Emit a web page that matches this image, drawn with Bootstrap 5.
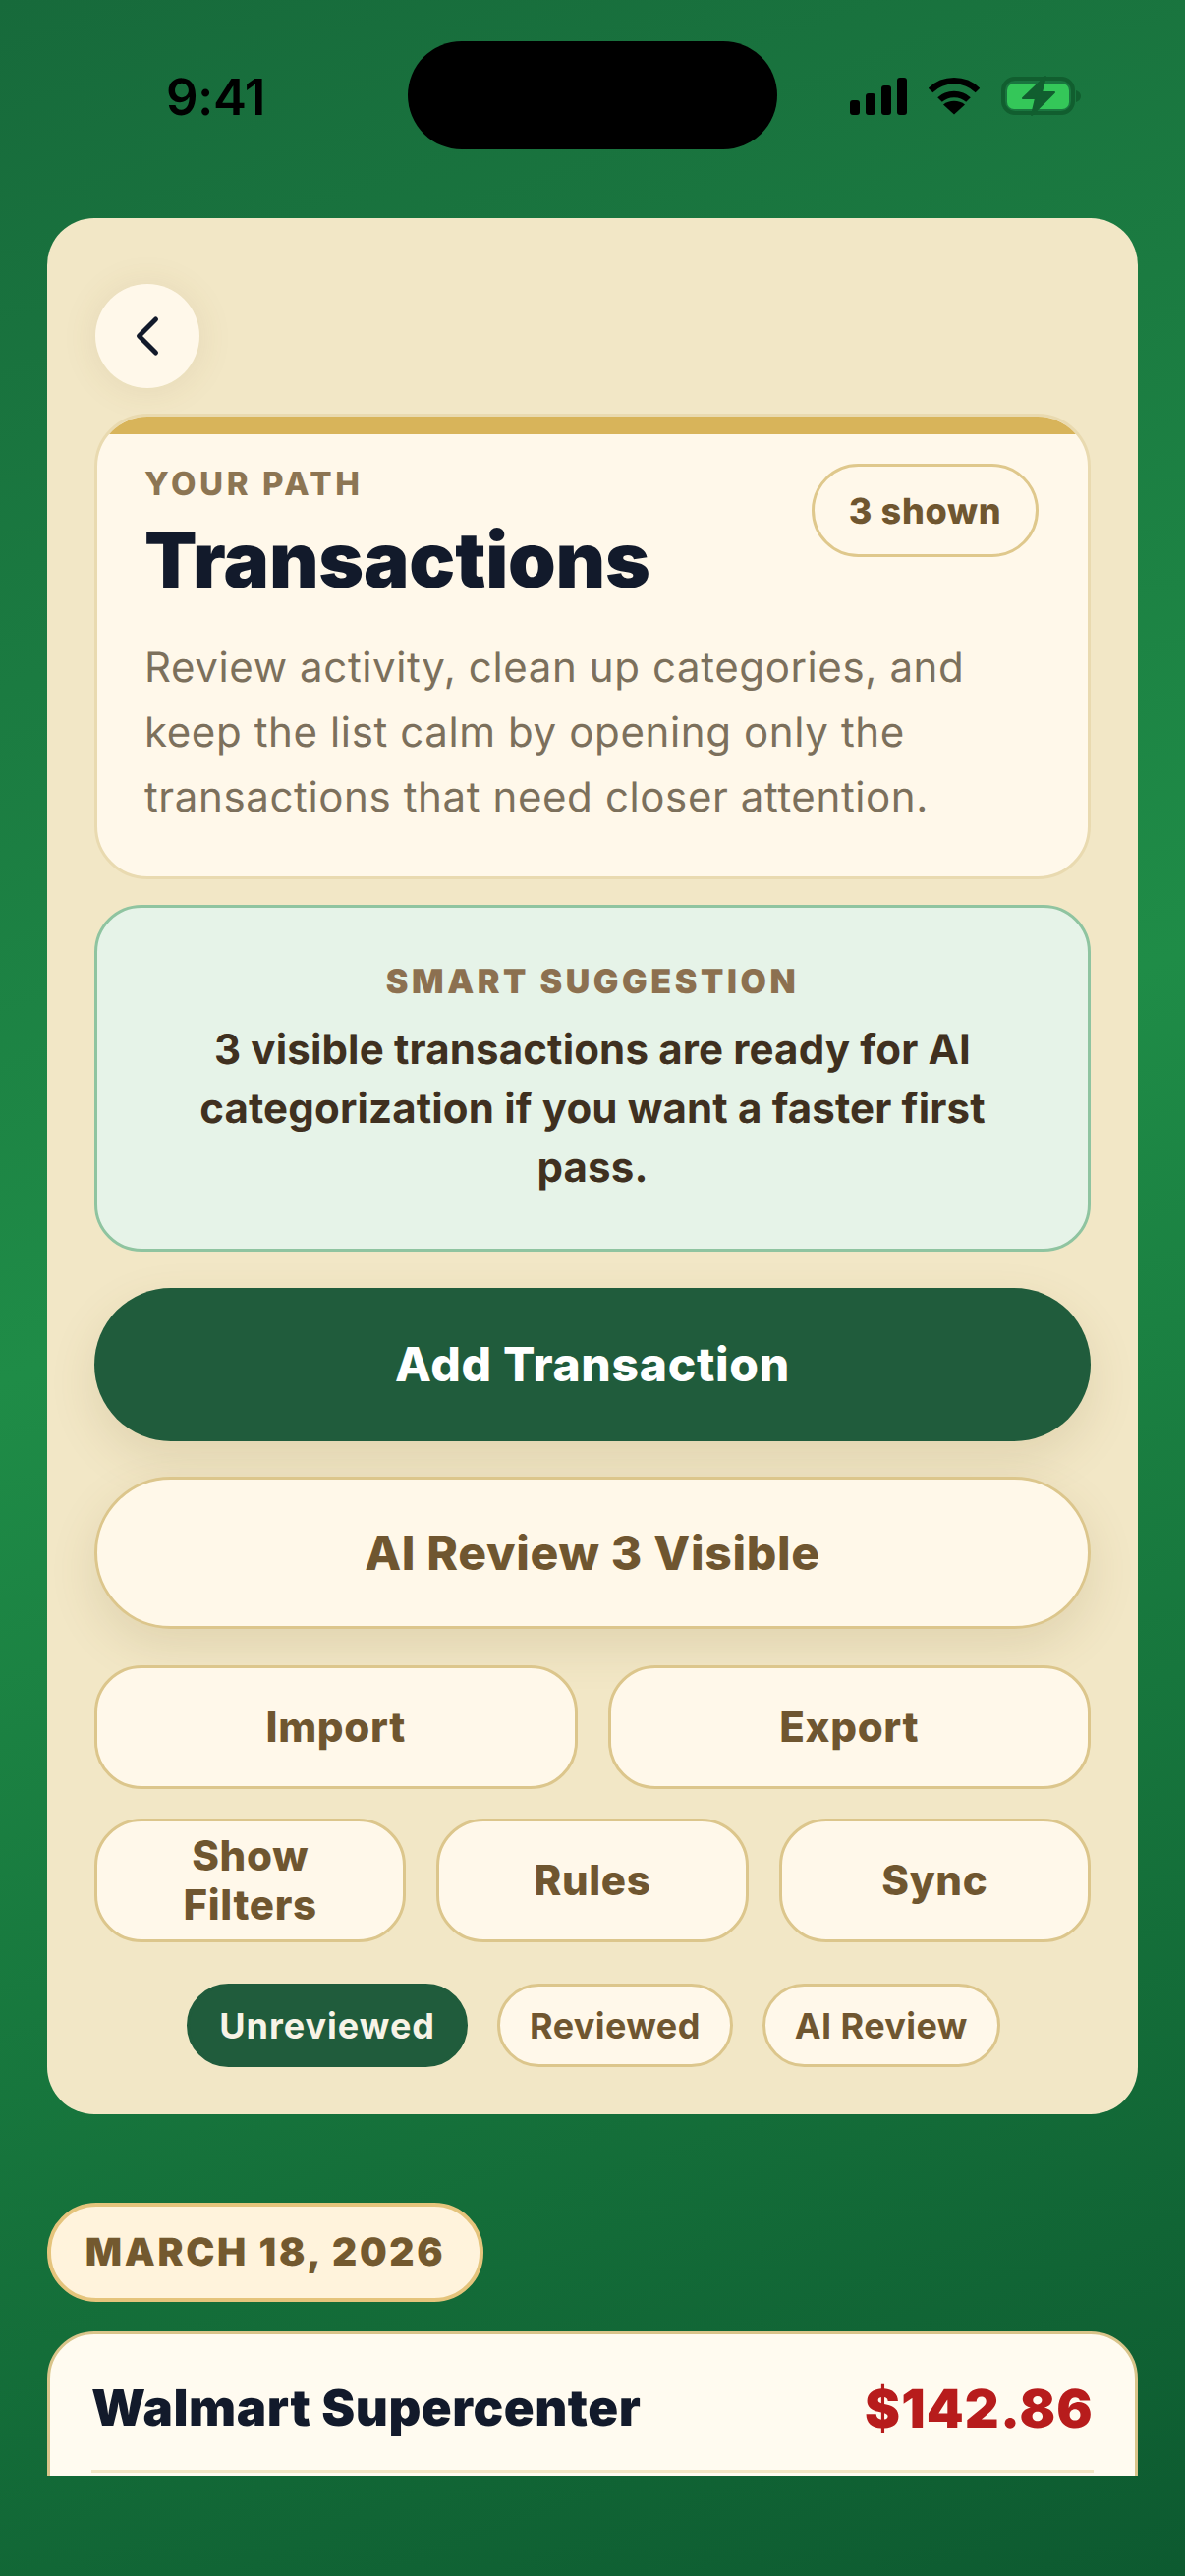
<!DOCTYPE html>
<html lang="en">
<head>
<meta charset="utf-8">
<title>Transactions</title>
<link rel="stylesheet" href="https://cdn.jsdelivr.net/npm/bootstrap@5.3.0/dist/css/bootstrap.min.css">
<style>
html,body{margin:0;height:2622px;overflow:hidden}
body{font-family:Inter,"Noto Sans",sans-serif;text-rendering:geometricPrecision;background:linear-gradient(160deg,#176a3b 0%,#1f8c47 46%,#0d5a30 100%);width:1206px}
.screen{height:2520px;overflow:hidden}
.statusrow{height:222px;padding:42px 0 0 169px}
.clock{font-size:51px;font-weight:600;color:#000;line-height:1;margin-top:32px;width:246px;letter-spacing:-.5px}
.island{width:376px;height:110px;background:#000;border-radius:55px}
.statusicons{margin-top:34px;margin-left:74px}
.icon-wifi{margin:0 20px 0 22px}
.panel{margin:0 48px;background:#f2e7c6;border-radius:48px;padding:67px 48px 48px 48px;height:1930px}
.backbtn{width:106px;height:106px;margin-left:1px;border-radius:50%;background:#fff8ea;border:0;padding:0;box-shadow:0 2px 36px rgba(120,90,40,.1)}
.hero{margin-top:26px;height:474px;background:#fff8ea;border:3px solid #e9dab0;border-radius:54px;overflow:hidden;position:relative;padding:0 48px}
.herobar{height:18px;background:#d8b45a;margin:0 -48px}
.eyebrow{font-size:33px;font-weight:800;letter-spacing:.11em;color:#8c7553;line-height:1;margin-top:34px}
.herotitle{font-size:78px;font-weight:900;color:#121a2b;line-height:1;letter-spacing:-.2px;margin:22px 0 0}
.herotext{font-size:42px;line-height:66px;letter-spacing:.62px;color:#7c705c;margin:38px 0 0}
.countpill{position:absolute;top:48px;right:50px;width:231px;height:95px;border:3px solid #dfc88c;border-radius:48px;color:#6f5630;font-size:36px;font-weight:800;letter-spacing:.7px;background:#fff8ea}
.smart{margin-top:26px;height:353px;background:#e6f3e8;border:3px solid #8fc4a0;border-radius:48px;padding:59px 48px 0;text-align:center}
.smarthead{font-size:34px;font-weight:900;letter-spacing:3.600px;color:#8c7050;line-height:1}
.smartbody{font-size:42px;font-weight:700;line-height:60px;letter-spacing:.16px;color:#3f3020;margin-top:22px}
.bigbtn{display:block;width:100%;border-radius:78px;font-size:48px;font-weight:800;letter-spacing:.7px;padding:0}
.bigbtn-dark{background:#205c3c;color:#fff;border:0;height:156px;margin-top:37px;box-shadow:0 18px 48px rgba(110,85,30,.13)}
.bigbtn-light{background:#fff8e9;color:#6f5630;border:3px solid #dcc68c;height:155px;margin-top:36px;box-shadow:0 18px 48px rgba(110,85,30,.13)}
.tool{flex:1 1 0;height:126px;background:#fff8ea;color:#6f5630;border:3px solid #dcc68c;border-radius:48px;font-size:42px;font-weight:800;letter-spacing:.7px;line-height:50px;padding:0 60px}
.toolrow{gap:31px;margin-top:30px}
.toolrow.first{margin-top:37px}
.tabrow{gap:30px;margin-top:42px;padding-left:2px}
.tabbtn{height:85px;border-radius:43px;font-size:36px;font-weight:700;letter-spacing:.4px;padding:0 30px;background:#fff8ea;color:#6f5630;border:3px solid #dcc68c}
.tabbtn.active,.tabbtn.active:hover{background:#205c3c;color:#f7f3e6;border-color:#205c3c;letter-spacing:1px}
.datepill{margin:90px 0 0 48px;width:444px;height:101px;padding-top:2px;background:#fff3dc;border:4px solid #e5c47c;border-radius:50px;color:#73592f;font-size:39px;font-weight:900;letter-spacing:.07em}
.txcard{margin:30px 48px 0;height:300px;background:#fffbf0;border:3px solid #d9c48a;border-radius:48px;padding:0 42px}
.txhead{height:141px;border-bottom:3px solid #f2e6c4;padding-top:14px}
.txname{font-size:51px;font-weight:900;color:#121a2b;letter-spacing:.55px}
.txamt{font-size:54px;font-weight:900;color:#b71c1c;letter-spacing:1.200px}
</style>
</head>
<body>
<div class="screen">
  <div class="statusrow d-flex align-items-start">
    <div class="clock flex-shrink-0">9:41</div>
    <div class="island flex-shrink-0"></div>
    <div class="statusicons d-flex align-items-center flex-shrink-0">
      <svg width="58" height="38" viewBox="0 0 58 38"><g fill="#000"><rect x="0" y="23" width="10" height="15" rx="3"/><rect x="16" y="16" width="10" height="22" rx="3"/><rect x="32" y="8" width="10" height="30" rx="3"/><rect x="48" y="0" width="10" height="38" rx="3"/></g></svg>
      <svg class="icon-wifi" width="52" height="38" viewBox="0 0 52 38"><g fill="none" stroke="#000" stroke-width="6.500"><path d="M2 13C15 0 37 0 50 13"/><path d="M11.500 22.500C19 15 33 15 40.500 22.500"/></g><path d="M26 37.500L15 27.500C21 22.500 31 22.500 37 27.500Z" fill="#000"/></svg>
      <svg width="86" height="43" viewBox="0 0 86 43"><rect x="4" y="4" width="71" height="35" rx="12" fill="none" stroke="#115e2f" stroke-width="4"/><rect x="8" y="9" width="63" height="26" rx="7" fill="#34c759"/><path d="M78 16c3 1 5 3 5 6s-2 5-5 6z" fill="#115e2f"/><path d="M47 2L24 24H37L33 41L56 18H43Z" fill="#115e2f" stroke="#115e2f" stroke-width="2" stroke-linejoin="round"/></svg>
    </div>
  </div>
  <div class="panel">
    <button class="backbtn d-flex align-items-center justify-content-center" type="button" aria-label="Back">
      <svg width="30" height="44" viewBox="0 0 30 44"><path d="M23.500 5L6.500 22L23.500 39" fill="none" stroke="#121a2b" stroke-width="5" stroke-linecap="round" stroke-linejoin="round"/></svg>
    </button>
    <div class="hero">
      <div class="herobar"></div>
      <div class="eyebrow">YOUR PATH</div>
      <h1 class="herotitle">Transactions</h1>
      <p class="herotext">Review activity, clean up categories, and keep the list calm by opening only the transactions that need closer attention.</p>
      <div class="countpill d-flex align-items-center justify-content-center">3 shown</div>
    </div>
    <div class="smart">
      <div class="smarthead">SMART SUGGESTION</div>
      <div class="smartbody">3 visible transactions are ready for AI categorization if you want a faster first pass.</div>
    </div>
    <button class="btn bigbtn bigbtn-dark" type="button">Add Transaction</button>
    <button class="btn bigbtn bigbtn-light" type="button">AI Review 3 Visible</button>
    <div class="d-flex toolrow first">
      <button class="btn tool" type="button">Import</button>
      <button class="btn tool" type="button">Export</button>
    </div>
    <div class="d-flex toolrow">
      <button class="btn tool" type="button">Show Filters</button>
      <button class="btn tool" type="button">Rules</button>
      <button class="btn tool" type="button">Sync</button>
    </div>
    <div class="d-flex justify-content-center tabrow">
      <button class="btn tabbtn active" type="button">Unreviewed</button>
      <button class="btn tabbtn" type="button">Reviewed</button>
      <button class="btn tabbtn" type="button">AI Review</button>
    </div>
  </div>
  <div class="datepill d-flex align-items-center justify-content-center">MARCH 18, 2026</div>
  <div class="txcard">
    <div class="txhead d-flex align-items-center justify-content-between">
      <span class="txname">Walmart Supercenter</span>
      <span class="txamt">$142.86</span>
    </div>
  </div>
</div>
<script src="https://cdn.jsdelivr.net/npm/bootstrap@5.3.0/dist/js/bootstrap.bundle.min.js"></script>
</body>
</html>
